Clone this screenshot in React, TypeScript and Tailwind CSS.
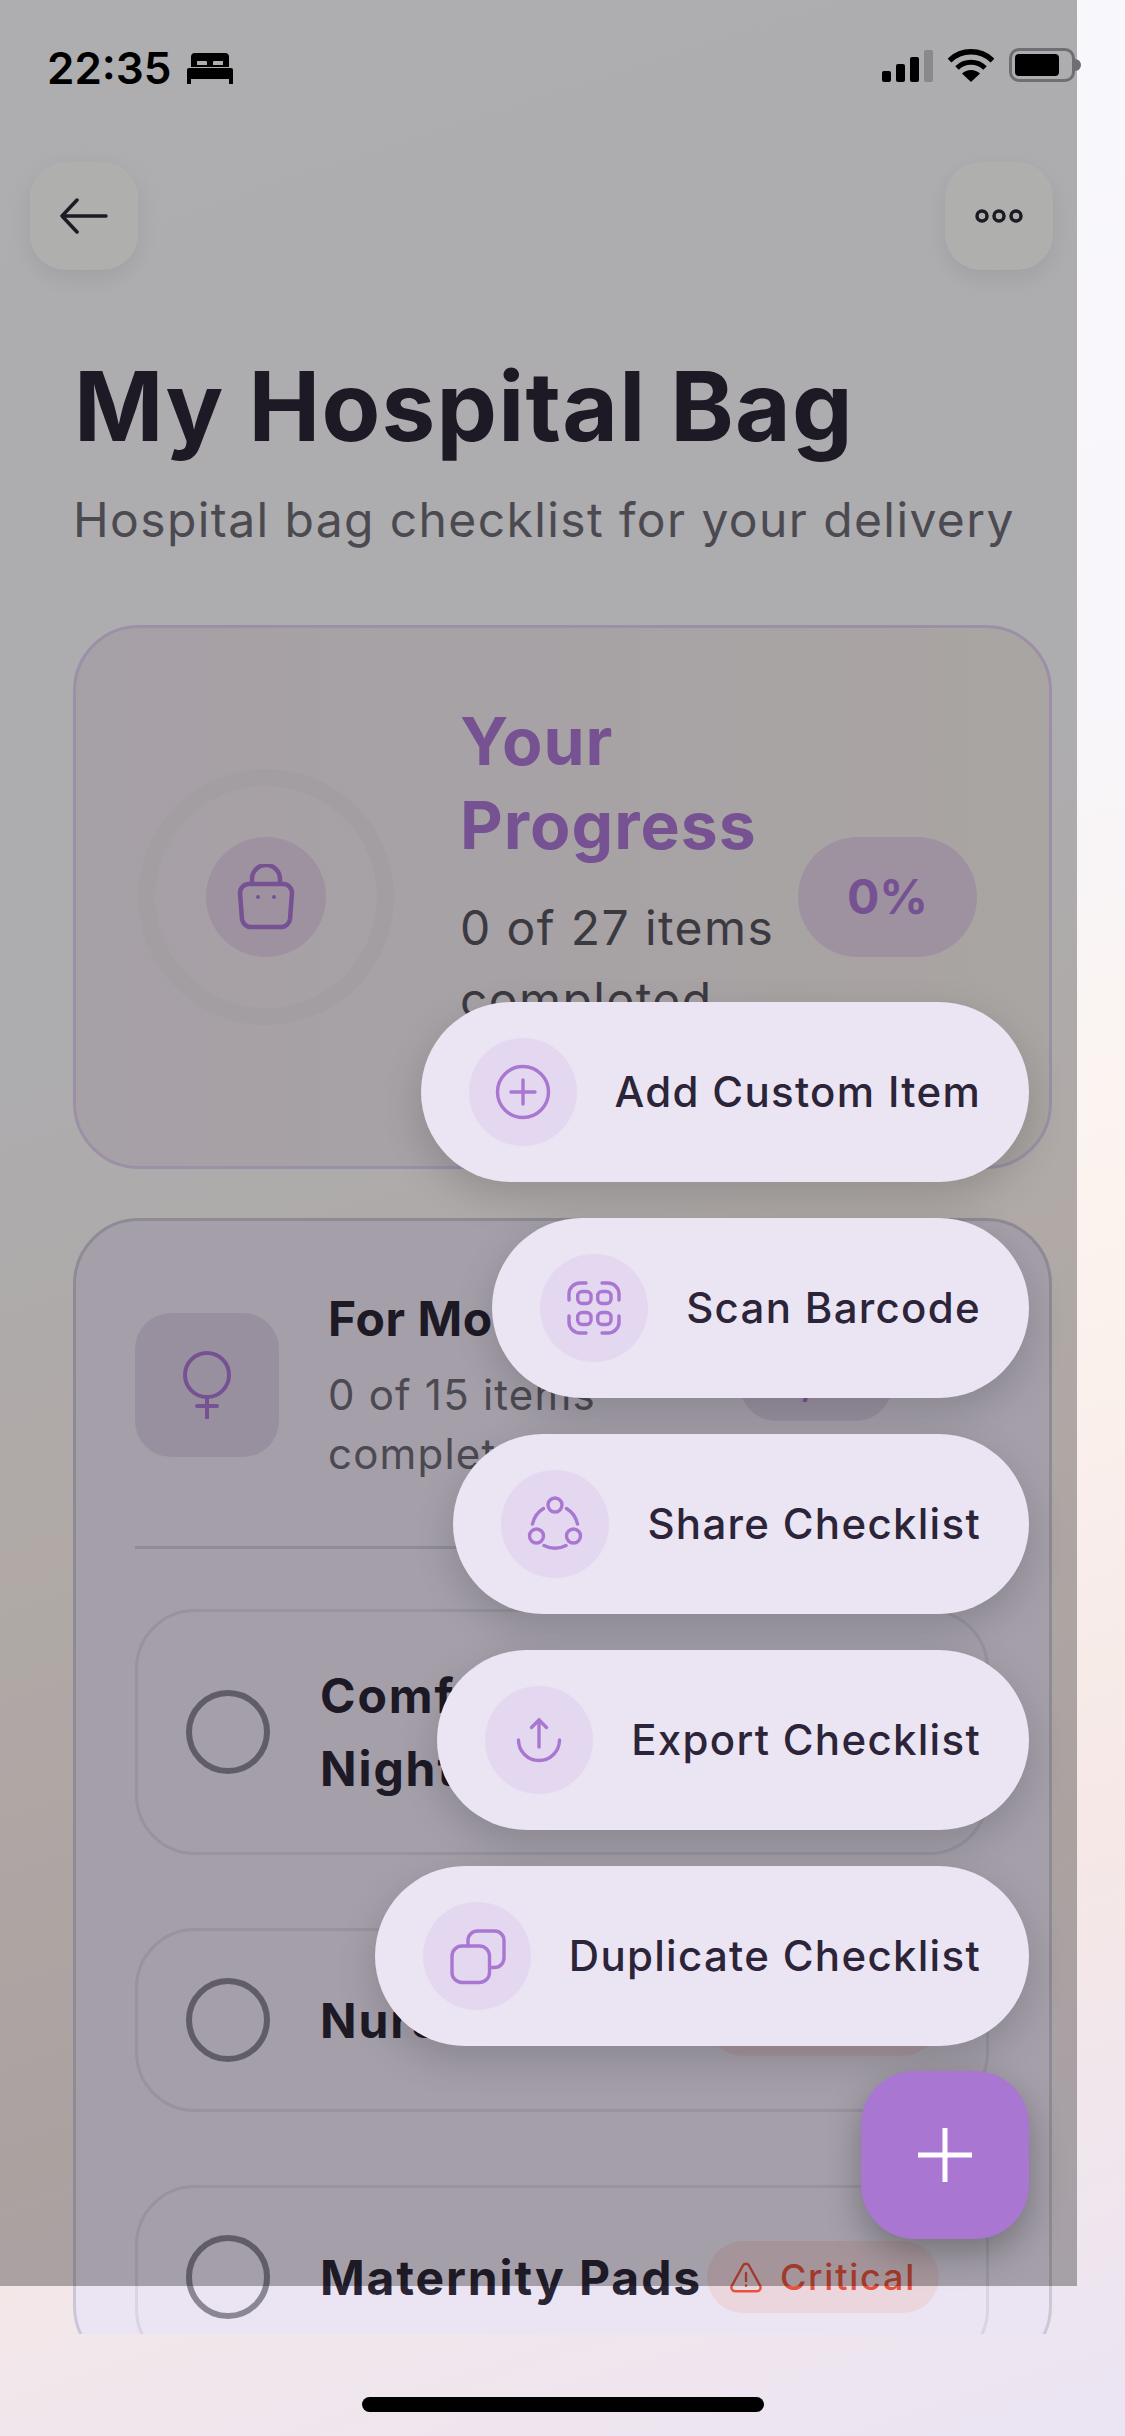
import type { ReactNode } from "react";

const font = { fontFamily: "Inter, 'Noto Sans', sans-serif" };

function BedIcon() {
  return (
    <svg width="46" height="31" viewBox="0 0 46 31" className="ml-[15px]">
      <path
        fillRule="evenodd"
        d="M8 0h30a4 4 0 0 1 4 4v10H4V4a4 4 0 0 1 4-4zM10 8v4h10V9a1 1 0 0 0-1-1zM26 9v3h10V8h-9a1 1 0 0 0-1 1z"
        fill="#000"
      />
      <path d="M0 17a2 2 0 0 1 2-2h42a2 2 0 0 1 2 2v14h-4v-5H4v5H0z" fill="#000" />
    </svg>
  );
}

function StatusIcons() {
  return (
    <div className="flex items-end gap-[15px]">
      <div className="flex items-end gap-[5px] h-[32px]">
        <div className="w-[9px] h-[11px] rounded-[2px] bg-black" />
        <div className="w-[9px] h-[18px] rounded-[2px] bg-black" />
        <div className="w-[9px] h-[25px] rounded-[2px] bg-black" />
        <div className="w-[9px] h-[32px] rounded-[2px] bg-[#8a888b]" />
      </div>
      <svg width="46" height="33" viewBox="0 0 46 33">
        <path d="M23 33L14 24.5A13 13 0 0 1 32 24.5Z" fill="#000" />
        <path d="M9 19A20 20 0 0 1 37 19" fill="none" stroke="#000" strokeWidth="5" />
        <path d="M1.5 11.5A31 31 0 0 1 44.5 11.5" fill="none" stroke="#000" strokeWidth="5.5" />
      </svg>
      <div className="flex items-center">
        <div className="w-[66px] h-[34px] rounded-[10px] border-[3px] border-[#6f6e72] p-[3px]">
          <div className="w-[44px] h-full rounded-[4px] bg-black" />
        </div>
        <div className="w-[6px] h-[12px] rounded-r-full bg-[#6f6e72]" />
      </div>
    </div>
  );
}

function HeaderButton({ children }: { children: ReactNode }) {
  return (
    <div className="w-[108px] h-[108px] rounded-[36px] bg-[#fbfbf8] shadow-[0_8px_24px_rgba(0,0,0,0.08)] flex items-center justify-center">
      {children}
    </div>
  );
}

function BagIcon() {
  return (
    <svg width="58" height="66" viewBox="0 0 58 66" fill="none" stroke="#a976d2" strokeWidth="4.5">
      <path d="M15 20V15a14 14 0 0 1 28 0v5" />
      <path d="M12 20h34a9 9 0 0 1 9 9l-2 26a9 9 0 0 1-9 8H14a9 9 0 0 1-9-8L3 29a9 9 0 0 1 9-9z" />
      <circle cx="21" cy="33" r="2" fill="#a976d2" stroke="none" />
      <circle cx="37" cy="33" r="2" fill="#a976d2" stroke="none" />
    </svg>
  );
}

function FemaleIcon() {
  return (
    <svg width="50" height="68" viewBox="0 0 50 68" fill="none" stroke="#a976d2" strokeWidth="4" strokeLinecap="round">
      <circle cx="25" cy="24" r="22" />
      <path d="M25 46v21M15 55h20" />
    </svg>
  );
}

function Pill({ label, icon }: { label: string; icon: ReactNode }) {
  return (
    <div className="h-[180px] rounded-[90px] bg-[#ebe4f3] pl-[48px] pr-[48px] flex items-center gap-[38px] shadow-[0_14px_40px_rgba(0,0,0,0.16)]">
      <div className="w-[108px] h-[108px] rounded-full bg-[#e3d8f0] flex items-center justify-center">
        <svg width="54" height="54" viewBox="0 0 54 54" fill="none" stroke="#a976d2" strokeWidth="3.4" strokeLinecap="round" className="overflow-visible">
          {icon}
        </svg>
      </div>
      <span className="text-[42px] leading-[60px] font-medium tracking-[1.3px] text-[#2c2438]">{label}</span>
    </div>
  );
}

function ChecklistItem({ title, titleClass }: { title: string; titleClass?: string }) {
  return (
    <div className="border-[3px] border-[#d9d4e1] rounded-[60px] py-[47px] pl-[48px] pr-[47px] flex items-center">
      <div className="w-[84px] h-[84px] rounded-full border-[6px] border-[#8b8694] shrink-0" />
      <div className={`ml-[50px] text-[48px] leading-[73px] font-bold tracking-[1.9px] text-[#2a2535] ${titleClass ?? ""}`}>
        {title}
      </div>
      <div className="ml-auto h-[72px] w-[232px] shrink-0 rounded-full bg-[#ecd6de] flex items-center justify-center gap-[18px]">
        <svg width="32" height="31" viewBox="0 0 32 31" fill="none" stroke="#e5533d" strokeWidth="2.4" strokeLinecap="round" strokeLinejoin="round">
          <path d="M13 3.5L2 23.5a3.8 3.8 0 0 0 3.3 5.8h21.4a3.8 3.8 0 0 0 3.3-5.8L19 3.5a3.4 3.4 0 0 0-6 0z" />
          <path d="M16 11v8M16 23.5v.4" />
        </svg>
        <span className="text-[36px] font-medium tracking-[1.8px] text-[#e5533d]">Critical</span>
      </div>
    </div>
  );
}

export default function App() {
  return (
    <div
      style={font}
      className="relative w-[1125px] h-[2436px] overflow-hidden bg-[linear-gradient(162deg,#f9f8fc_0%,#f8f6fa_38%,#fcf3ee_56%,#f5e8e6_78%,#ebe4f3_100%)]"
    >
      {/* SCROLL AREA */}
      <div className="h-[2334px] overflow-hidden">
        <div className="relative z-20 h-[162px] pl-[47px] pr-[44px] pt-[48px] flex items-start justify-between">
          <div className="flex items-center h-[40px]">
            <span className="text-[44px] leading-[40px] font-semibold text-black">22:35</span>
            <BedIcon />
          </div>
          <StatusIcons />
        </div>

        {/* HEADER */}
        <div className="w-[1083px] px-[30px] flex justify-between">
          <HeaderButton>
            <svg width="48" height="36" viewBox="0 0 48 36" fill="none" stroke="#2a2535" strokeWidth="3.5" strokeLinecap="round" strokeLinejoin="round">
              <path d="M2 18h44M17 2L2 18l15 16" />
            </svg>
          </HeaderButton>
          <HeaderButton>
            <svg width="50" height="16" viewBox="0 0 50 16" fill="none" stroke="#2a2535" strokeWidth="3.5">
              <circle cx="8" cy="8" r="5" />
              <circle cx="25" cy="8" r="5" />
              <circle cx="42" cy="8" r="5" />
            </svg>
          </HeaderButton>
        </div>

        <h1 className="mt-[78px] ml-[74px] text-[96px] leading-[116px] font-bold tracking-[1.2px] text-[#2a2535]">My Hospital Bag</h1>
        <p className="mt-[26px] ml-[73px] text-[48px] leading-[60px] tracking-[1.4px] text-[#6e6a75]">
          Hospital bag checklist for your delivery
        </p>

        {/* PROGRESS CARD */}
        <div className="mt-[75px] ml-[73px] w-[979px] h-[544px] rounded-[66px] border-[3px] border-[#e0cff0] bg-[linear-gradient(90deg,#eee6ef,#f3ece9)] pl-[62px] pr-[71px] flex items-center">
          <div className="w-[256px] h-[256px] rounded-full border-[17px] border-[#e9e2e7] flex items-center justify-center shrink-0">
            <div className="w-[120px] h-[120px] rounded-full bg-[#e2d1e7] flex items-center justify-center">
              <BagIcon />
            </div>
          </div>
          <div className="ml-[66px] w-[338px] mb-[59px]">
            <div className="text-[66px] leading-[84px] font-bold tracking-[1px] text-[#a976d2]">Your Progress</div>
            <div className="mt-[25px] text-[48px] leading-[72px] tracking-[1.4px] text-[#57535e]">0 of 27 items completed</div>
          </div>
          <div className="w-[179px] h-[120px] rounded-full bg-[#e2d1e7] flex items-center justify-center text-[48px] font-bold text-[#a976d2] shrink-0">
            0%
          </div>
        </div>

        {/* MOTHER CARD */}
        <div className="mt-[49px] ml-[73px] w-[979px] rounded-[66px] border-[3px] border-[#ccc7d6] bg-[#ebe4f3] px-[59px] pt-[65px]">
          <div className="flex items-center pb-[63px]">
            <div className="w-[144px] h-[144px] rounded-[36px] bg-[#dccfe4] flex items-center justify-center shrink-0">
              <FemaleIcon />
            </div>
            <div className="ml-[49px] w-[412px]">
              <div className="text-[48px] leading-[66px] font-bold tracking-[0.6px] text-[#2a2535]">For Mother</div>
              <div className="mt-[13px] text-[42px] leading-[59px] tracking-[1.2px] text-[#6e6a75]">0 of 15 items completed</div>
            </div>
            <div className="w-[152px] h-[72px] rounded-full bg-[#dccfe4] flex items-center justify-center text-[36px] font-semibold text-[#a976d2] shrink-0">
              0/15
            </div>
          </div>
          <div className="h-[3px] bg-[#cfc9d8]" />
          <div className="mt-[60px] flex flex-col gap-[73px] w-[854px]">
            <ChecklistItem title="Comfortable Nightgown" titleClass="w-[300px]" />
            <ChecklistItem title="Nurse Shoes" />
            <ChecklistItem title="Maternity Pads" />
          </div>
        </div>
      </div>

      {/* HOME INDICATOR */}
      <div className="absolute left-[362px] top-[2397px] w-[402px] h-[15px] rounded-full bg-black" />

      {/* DIM OVERLAY */}
      <div className="absolute left-0 top-0 z-10 w-[1077px] h-[2286px] bg-black/30" />

      {/* FAB MENU */}
      <div className="absolute z-20 top-[1002px] right-[96px] flex flex-col items-end gap-[36px]">
        <Pill
          label="Add Custom Item"
          icon={
            <>
              <circle cx="27" cy="27" r="25.5" />
              <path d="M27 15v24M15 27h24" />
            </>
          }
        />
        <Pill
          label="Scan Barcode"
          icon={
            <>
              <path d="M2 19v-6A11 11 0 0 1 13 2h6M35 2h6a11 11 0 0 1 11 11v6M52 35v6a11 11 0 0 1-11 11h-6M19 52h-6A11 11 0 0 1 2 41v-6" />
              <rect x="10.7" y="10.5" width="13.3" height="12" rx="4.5" />
              <rect x="30.7" y="10.5" width="13.3" height="12" rx="4.5" />
              <rect x="10.7" y="31.5" width="13.3" height="12" rx="4.5" />
              <rect x="30.7" y="31.5" width="13.3" height="12" rx="4.5" />
            </>
          }
        />
        <Pill
          label="Share Checklist"
          icon={
            <>
              <circle cx="27" cy="8" r="7" />
              <circle cx="8.5" cy="39" r="7" />
              <circle cx="45.5" cy="39" r="7" />
              <path d="M15.5 11.5A24 24 0 0 0 4.5 27M38.5 11.5A24 24 0 0 1 49.5 27M16 48.5A24 24 0 0 0 38 48.5" />
            </>
          }
        />
        <Pill
          label="Export Checklist"
          icon={<path d="M27 7v27M19.5 14.5L27 7l7.5 7.5M6.5 27a20.5 20.5 0 0 0 41 0" />}
        />
        <Pill
          label="Duplicate Checklist"
          icon={
            <>
              <rect x="2" y="17" width="37.5" height="36.5" rx="10" />
              <path d="M18 17v-5.5A9.5 9.5 0 0 1 27.5 2H44.5A9.5 9.5 0 0 1 54 11.5V29A9.5 9.5 0 0 1 44.5 38.5H40" />
            </>
          }
        />
        <div className="mt-[-11px] w-[168px] h-[168px] rounded-[54px] bg-[#a976d2] shadow-[0_14px_36px_rgba(0,0,0,0.28)] flex items-center justify-center">
          <svg width="54" height="54" viewBox="0 0 54 54" stroke="#fff" strokeWidth="5">
            <path d="M27 0v54M0 27h54" />
          </svg>
        </div>
      </div>
    </div>
  );
}
